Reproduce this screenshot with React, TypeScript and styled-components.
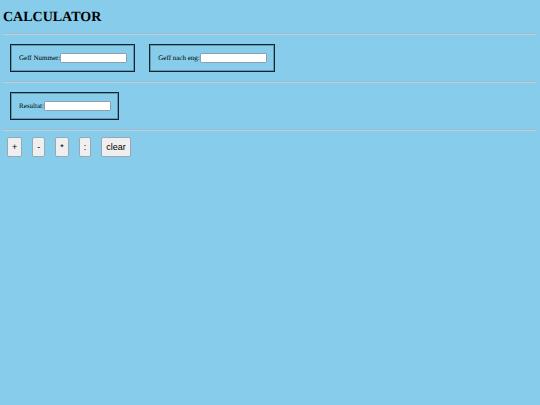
import React, { useState } from "react";
import styled, { createGlobalStyle } from "styled-components";

const GlobalStyle = createGlobalStyle`
  body {
    margin: 0;
    background: #87cdeb;
    color: #000;
    font-family: "Liberation Serif", "Times New Roman", serif;
    text-rendering: geometricPrecision;
  }
`;

const Page = styled.main`
  padding: 9px 3px 0;
`;

const Title = styled.h1`
  margin: 0 0 6px;
  font-size: 14px;
  line-height: 18px;
`;

const Divider = styled.hr`
  height: 0;
  margin: 0;
  border: 0;
  border-top: 1px solid #9bbdcf;
  border-bottom: 1px solid #b4d3e0;
`;

const FieldRow = styled.div`
  display: flex;
  flex-wrap: wrap;
  gap: 14px;
  padding: 9px 7px;
`;

const FieldBox = styled.div`
  display: flex;
  align-items: center;
  box-sizing: border-box;
  height: 28px;
  padding: 0 7px 0 8px;
  border: 1px solid #10242d;
  box-shadow: inset 0 0 0 1px rgba(16, 36, 45, 0.3);
`;

const Label = styled.label`
  font-size: 7px;
  line-height: 8px;
  white-space: nowrap;
`;

const TextBox = styled.input`
  box-sizing: border-box;
  width: 67px;
  height: 10px;
  padding: 0 1px;
  border: 1px solid #8ba3af;
  border-radius: 1px;
  background: #fff;
  font: 7px "Liberation Sans", Arial, sans-serif;
`;

const ButtonRow = styled.div`
  display: flex;
  flex-wrap: wrap;
  gap: 10px;
  padding: 6px 4px;
`;

const Button = styled.button`
  height: 20px;
  padding: 0 4px;
  border: 1px solid #98a9b2;
  border-radius: 2px;
  background: #efefef;
  color: #000;
  font: 9px/16px "Liberation Sans", Arial, sans-serif;
`;

type FieldProps = {
  id: string;
  label: string;
  value: string;
  onChange?: (value: string) => void;
};

function Field({ id, label, value, onChange }: FieldProps) {
  return (
    <FieldBox>
      <Label htmlFor={id}>{label}</Label>
      <TextBox
        id={id}
        type="text"
        value={value}
        readOnly={!onChange}
        onChange={(event) => onChange?.(event.target.value)}
      />
    </FieldBox>
  );
}

const operations: Record<string, (a: number, b: number) => number> = {
  "+": (a, b) => a + b,
  "-": (a, b) => a - b,
  "*": (a, b) => a * b,
  ":": (a, b) => a / b,
};

export default function App() {
  const [first, setFirst] = useState("");
  const [second, setSecond] = useState("");
  const [result, setResult] = useState("");

  const clear = () => {
    setFirst("");
    setSecond("");
    setResult("");
  };

  return (
    <>
      <GlobalStyle />
      <Page>
        <Title>CALCULATOR</Title>
        <Divider />
        <FieldRow>
          <Field id="first" label="Geff Nummer:" value={first} onChange={setFirst} />
          <Field id="second" label="Geff nach eng:" value={second} onChange={setSecond} />
        </FieldRow>
        <Divider />
        <FieldRow>
          <Field id="result" label="Resultat:" value={result} />
        </FieldRow>
        <Divider />
        <ButtonRow>
          {Object.entries(operations).map(([symbol, apply]) => (
            <Button
              key={symbol}
              type="button"
              onClick={() => setResult(String(apply(Number(first), Number(second))))}
            >
              {symbol}
            </Button>
          ))}
          <Button type="button" onClick={clear}>
            clear
          </Button>
        </ButtonRow>
      </Page>
    </>
  );
}
